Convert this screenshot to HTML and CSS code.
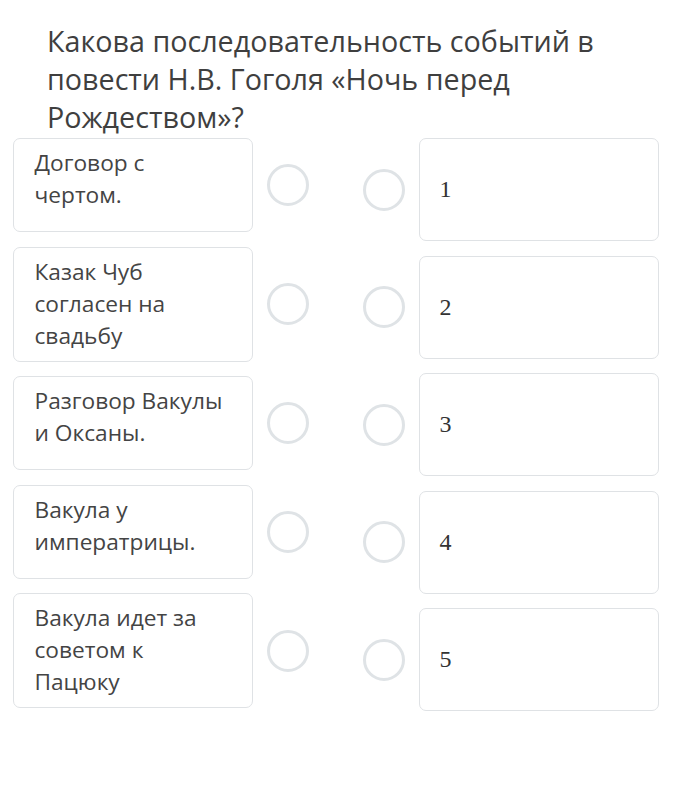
FILE: index.html
```html
<!DOCTYPE html>
<html lang="ru">
<head>
<meta charset="utf-8">
<title>Вопрос</title>
<link rel="stylesheet" href="styles.css">
</head>
<body>
<div class="page">
  <h1 class="question">Какова последовательность событий в повести Н.В. Гоголя «Ночь перед Рождеством»?</h1>
  <div class="board">
    <div class="col col-left">
      <div class="row"><div class="card card-text">Договор с чертом.</div><span class="dot"></span></div>
      <div class="row"><div class="card card-text">Казак Чуб согласен на свадьбу</div><span class="dot"></span></div>
      <div class="row"><div class="card card-text">Разговор Вакулы и Оксаны.</div><span class="dot"></span></div>
      <div class="row"><div class="card card-text">Вакула у императрицы.</div><span class="dot"></span></div>
      <div class="row"><div class="card card-text">Вакула идет за советом к Пацюку</div><span class="dot"></span></div>
    </div>
    <div class="col col-right">
      <div class="row"><span class="dot"></span><div class="card card-num">1</div></div>
      <div class="row"><span class="dot"></span><div class="card card-num">2</div></div>
      <div class="row"><span class="dot"></span><div class="card card-num">3</div></div>
      <div class="row"><span class="dot"></span><div class="card card-num">4</div></div>
      <div class="row"><span class="dot"></span><div class="card card-num">5</div></div>
    </div>
  </div>
</div>
</body>
</html>
```
FILE: styles.css
```css
html, body {
  margin: 0;
  padding: 0;
  background: #ffffff;
}
body {
  font-family: "Open Sans", "Noto Sans", sans-serif;
  color: #404040;
}
.page {
  width: 696px;
}
.question {
  margin: 0;
  padding: 22px 0 0 47px;
  width: 600px;
  font-size: 28.7px;
  line-height: 38px;
  font-weight: 400;
  color: #3f3f3f;
}
.board {
  display: flex;
  gap: 54px;
  padding: 2px 13px 0 13px;
}
.col {
  display: flex;
  flex-direction: column;
  gap: 14.5px;
}
.row {
  display: flex;
  align-items: center;
  gap: 14px;
}
.card {
  box-sizing: border-box;
  width: 240px;
  border: 1.5px solid #dfe2e5;
  border-radius: 7px;
  background: #fff;
}
.card-text {
  min-height: 94px;
  padding: 8px 22px 9px 20.5px;
  font-size: 22.7px;
  line-height: 32px;
  color: #444444;
}
.card-num {
  height: 103px;
  display: flex;
  align-items: center;
  padding-left: 19.5px;
  font-family: "Liberation Serif", "Times New Roman", serif;
  font-size: 24px;
  color: #333333;
}
.dot {
  box-sizing: border-box;
  width: 42px;
  height: 42px;
  flex: 0 0 42px;
  border: 3.5px solid #dfe3e6;
  border-radius: 50%;
}
```
